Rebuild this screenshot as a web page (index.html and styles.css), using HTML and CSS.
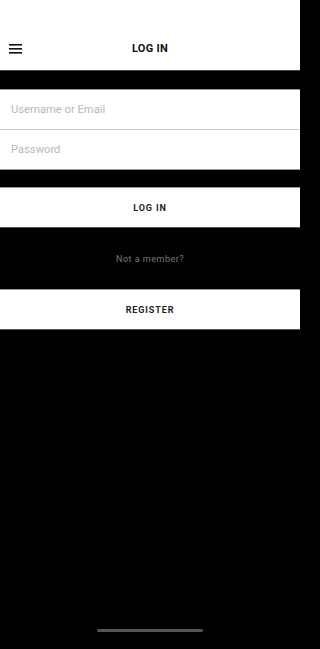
FILE: index.html
```html
<!DOCTYPE html>
<html>
<head>
<meta charset="utf-8">
<link rel="stylesheet" href="styles.css">
</head>
<body>
<div class="screen">
  <header class="topbar">
    <svg class="menu" width="13" height="10" viewBox="0 0 13 10">
      <rect x="0" y="0" width="13" height="1.6" fill="#111"/>
      <rect x="0" y="4" width="13" height="1.6" fill="#111"/>
      <rect x="0" y="8" width="13" height="1.6" fill="#111"/>
    </svg>
    <div class="title">LOG IN</div>
  </header>
  <div class="form">
    <div class="field">Username or Email</div>
    <div class="field field-last">Password</div>
  </div>
  <div class="btn btn-login">LOG IN</div>
  <div class="note">Not a member?</div>
  <div class="btn">REGISTER</div>
  <div class="spacer"></div>
  <div class="home"><div class="home-bar"></div></div>
</div>
</body>
</html>
```

FILE: styles.css
```css
html, body {
  margin: 0;
  padding: 0;
  background: #000;
}
body {
  font-family: Roboto, "Liberation Sans", sans-serif;
}
.screen {
  width: 300px;
  height: 649px;
  display: flex;
  flex-direction: column;
  background: #000;
  overflow: hidden;
}
.topbar {
  height: 71px;
  background: #fff;
  border-bottom: 1px solid #444;
  box-sizing: border-box;
  position: relative;
  display: flex;
  align-items: flex-end;
  justify-content: center;
  padding-bottom: 15px;
}
.menu {
  position: absolute;
  left: 9px;
  top: 44px;
}
.title {
  font-size: 11px;
  font-weight: 700;
  color: #111;
  letter-spacing: 0.3px;
  line-height: 13px;
}
.form {
  margin-top: 18px;
  background: #fff;
  border-top: 1px solid #999;
  border-bottom: 1px solid #999;
}
.field {
  height: 39px;
  display: flex;
  align-items: center;
  padding-left: 11px;
  font-size: 11.2px;
  color: #b8b8b8;
  border-bottom: 1px solid #c8c8c8;
}
.field-last {
  border-bottom: none;
}
.btn {
  height: 39px;
  background: #fff;
  border-top: 1px solid #999;
  border-bottom: 1px solid #555;
  display: flex;
  align-items: center;
  justify-content: center;
  font-size: 9px;
  font-weight: 700;
  letter-spacing: 0.9px;
  color: #222;
}
.btn-login {
  margin-top: 17px;
}
.note {
  height: 61px;
  display: flex;
  align-items: center;
  justify-content: center;
  font-size: 9px;
  color: #7a7a7a;
  letter-spacing: 0.5px;
}
.spacer {
  flex: 1;
}
.home {
  height: 22px;
  display: flex;
  justify-content: center;
}
.home-bar {
  width: 106px;
  height: 3px;
  border-radius: 2px;
  background: #555;
  margin-top: 2px;
}
```
